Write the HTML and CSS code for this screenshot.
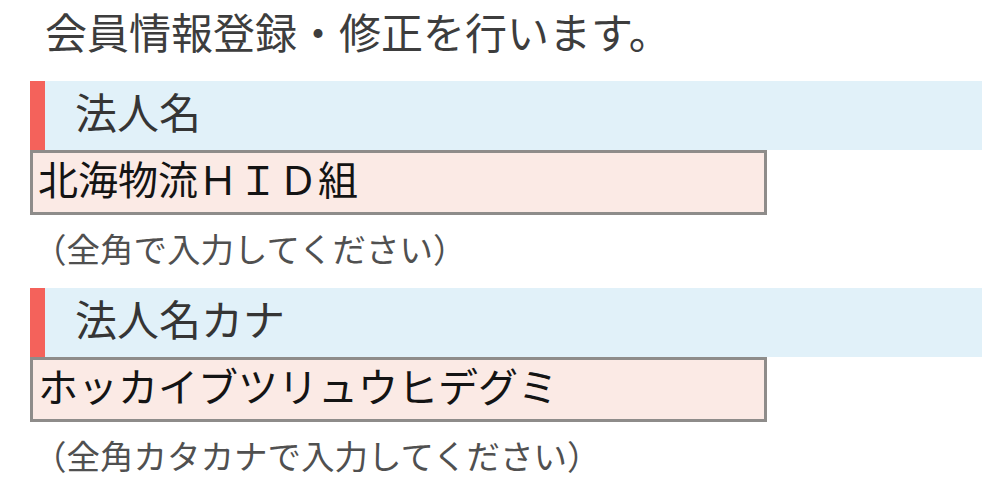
FILE: index.html
```html
<!DOCTYPE html>
<html lang="ja">
<head>
<meta charset="utf-8">
<title>会員情報登録・修正</title>
<link rel="stylesheet" href="styles.css">
</head>
<body>
<h1 class="page-title">会員情報登録・修正を行います。</h1>
<section class="field">
  <div class="field-label">法人名</div>
  <div class="field-input">北海物流ＨＩＤ組</div>
  <p class="field-note">（全角で入力してください）</p>
</section>
<section class="field">
  <div class="field-label">法人名カナ</div>
  <div class="field-input">ホッカイブツリュウヒデグミ</div>
  <p class="field-note">（全角カタカナで入力してください）</p>
</section>
</body>
</html>
```
FILE: styles.css
```css
html, body {
  margin: 0;
  padding: 0;
  background: #ffffff;
}
body {
  font-family: "Noto Sans CJK JP", "Noto Sans", sans-serif;
  overflow: hidden;
}
.page-title {
  margin: 0 0 19px 0;
  padding-left: 45px;
  font-size: 42px;
  font-weight: normal;
  line-height: 62px;
  color: #3d3d3d;
  white-space: nowrap;
}
.field {
  margin-left: 30px;
}
.field-label {
  box-sizing: border-box;
  height: 69px;
  display: flex;
  align-items: center;
  padding: 0 0 10px 30px;
  border-left: 15px solid #f4625b;
  background: #e1f1f9;
  font-size: 42px;
  color: #353535;
}
.field-input {
  box-sizing: border-box;
  width: 737px;
  height: 65px;
  display: flex;
  align-items: center;
  padding: 0 0 10px 5px;
  border: 3px solid #8e8c8a;
  background: #fbeae5;
  font-size: 40px;
  color: #141414;
  white-space: nowrap;
}
.field-note {
  margin: 0 0 7px 0;
  padding-left: 3px;
  font-size: 33.5px;
  line-height: 66px;
  color: #505050;
  white-space: nowrap;
}
```
